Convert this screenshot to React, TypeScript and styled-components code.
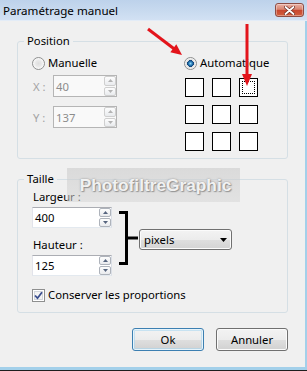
import styled, { createGlobalStyle } from "styled-components";

const GlobalStyle = createGlobalStyle`
  html, body {
    margin: 0;
    padding: 0;
  }
  body {
    background: #f0f0f0;
    font-family: "Noto Sans", "Open Sans", sans-serif;
    font-size: 11.3px;
    color: #000;
  }
`;

const Window = styled.div`
  position: relative;
  width: 307px;
  height: 371px;
  display: flex;
  flex-direction: column;
  overflow: hidden;
  background: #f0f0f0;
`;

const TitleBar = styled.div`
  flex: none;
  height: 20px;
  display: flex;
  justify-content: space-between;
  align-items: flex-start;
  padding-left: 3px;
  background: linear-gradient(#bdd2eb, #c8daef 55%, #d2e1f3);
  border-bottom: 1px solid #e3ecf7;
`;

const Title = styled.span`
  margin-top: 4px;
  font-size: 11.6px;
  line-height: 14px;
`;

const CloseButton = styled.div`
  width: 29px;
  height: 14px;
  margin: 3px 3px 0 0;
  box-sizing: border-box;
  display: flex;
  align-items: center;
  justify-content: center;
  border: 1px solid #8d4d45;
  border-radius: 3px;
  background: linear-gradient(#eab1a5, #d88470 45%, #c7462f 50%, #d2603f);
  box-shadow: inset 0 0 0 1px rgba(255, 255, 255, 0.35);
`;

const Client = styled.div`
  flex: 1;
  display: flex;
  flex-direction: column;
  padding: 12px 17px 0 17px;
  border-right: 2px solid #a3d0ea;
  border-bottom: 3px solid #a3d0ea;
`;

const BottomEdge = styled.div`
  flex: none;
  height: 1px;
  background: #1e1e1e;
`;

const GroupBox = styled.fieldset<{ $gap?: number }>`
  margin: ${(p) => p.$gap ?? 0}px 0 0 0;
  padding: 0;
  min-width: 0;
  border: 1px solid #d5dfe5;
  border-radius: 3px;
`;

const Legend = styled.legend`
  margin-left: 6px;
  padding: 0 3px;
  line-height: 16px;
`;

const PositionBody = styled.div`
  display: flex;
  padding: 6px 0 7px 14px;
`;

const Column = styled.div<{ $width?: number }>`
  display: flex;
  flex-direction: column;
  ${(p) => (p.$width ? `width: ${p.$width}px;` : "")}
`;

const OptionRow = styled.div<{ $gap?: number }>`
  display: flex;
  align-items: center;
  gap: 3px;
  height: 16px;
  line-height: 16px;
  margin-top: ${(p) => p.$gap ?? 0}px;
  white-space: nowrap;
`;

const RadioMark = styled.span<{ $checked?: boolean }>`
  flex: none;
  width: 13px;
  height: 13px;
  box-sizing: border-box;
  border-radius: 50%;
  border: 1px solid #8e8f8f;
  background: ${(p) =>
    p.$checked
      ? "radial-gradient(circle at 50% 50%, #8fd4f6 0, #2a7db8 1.8px, #0f3f73 3.3px, #dcdcdc 3.6px, #f8f8f8 5.5px)"
      : "radial-gradient(circle at 50% 50%, #dedede 0, #e9e9e9 3px, #fafafa 5.5px)"};
`;

const FieldRow = styled.div<{ $gap: number }>`
  display: flex;
  align-items: center;
  margin-top: ${(p) => p.$gap}px;
`;

const AxisLabel = styled.span`
  width: 21px;
  padding-left: 1px;
  box-sizing: border-box;
  color: #a3a3a3;
`;

const SpinBox = styled.div<{ $w: number; $h: number; $disabled?: boolean; $gap?: number }>`
  width: ${(p) => p.$w}px;
  height: ${(p) => p.$h}px;
  margin-top: ${(p) => p.$gap ?? 0}px;
  box-sizing: border-box;
  display: flex;
  align-items: center;
  justify-content: space-between;
  padding: 0 0 0 2px;
  border: 1px solid;
  border-color: ${(p) =>
    p.$disabled ? "#b5b5b5" : "#abadb3 #dbdfe6 #e3e9ef #e2e3ea"};
  background: ${(p) => (p.$disabled ? "#f9f9f9" : "#fff")};
  color: ${(p) => (p.$disabled ? "#8c8c8c" : "#000")};
`;

const SpinButtons = styled.div`
  align-self: stretch;
  display: flex;
  flex-direction: column;
  gap: 1px;
  width: 12px;
`;

const SpinButton = styled.span<{ $disabled?: boolean }>`
  flex: 1;
  box-sizing: border-box;
  display: flex;
  align-items: center;
  justify-content: center;
  border: 1px solid ${(p) => (p.$disabled ? "#cfcfcf" : "#aeb3bb")};
  border-radius: 2px;
  background: linear-gradient(#fdfdfd, #e9ebee);
`;

const PositionGrid = styled.div`
  display: grid;
  grid-template-columns: repeat(3, 19px);
  grid-auto-rows: 19px;
  gap: 8px;
  margin: 7px 0 0 1px;
`;

const Cell = styled.span<{ $focused?: boolean }>`
  box-sizing: border-box;
  border: 1px solid #000;
  background: #fff;
  ${(p) => (p.$focused ? "outline: 1px dotted #000; outline-offset: -4px;" : "")}
`;

const SizeBody = styled.div`
  display: flex;
  flex-direction: column;
  padding: 0 0 9px 14px;
`;

const SizeRow = styled.div`
  display: flex;
  align-items: flex-start;
`;

const Caption = styled.div<{ $gap: number }>`
  line-height: 16px;
  padding-left: 1px;
  margin-top: ${(p) => p.$gap}px;
`;

const Bracket = styled.svg`
  flex: none;
  margin: 23px 0 0 6px;
`;

const Dropdown = styled.div`
  width: 93px;
  height: 21px;
  margin-top: 42px;
  box-sizing: border-box;
  display: flex;
  align-items: center;
  justify-content: space-between;
  padding: 0 4px 0 4px;
  border: 1px solid #707070;
  border-radius: 3px;
  background: linear-gradient(#f3f3f3, #ececec 50%, #dfdfdf 50%, #d3d3d3);
  box-shadow: inset 0 0 0 1px #fbfbfb;
`;

const CheckMark = styled.span`
  flex: none;
  width: 13px;
  height: 13px;
  box-sizing: border-box;
  display: flex;
  align-items: center;
  justify-content: center;
  border: 1px solid #8e8f8f;
  background: #f4f4f4;
  box-shadow: inset 0 0 0 1px #fff, inset 0 0 0 2px #d2d6dc;
`;

const ButtonRow = styled.div`
  display: flex;
  justify-content: flex-end;
  gap: 12px;
  margin-top: 15px;
`;

const DialogButton = styled.div<{ $default?: boolean }>`
  width: 72px;
  height: 23px;
  box-sizing: border-box;
  display: flex;
  align-items: center;
  justify-content: center;
  border: 1px solid ${(p) => (p.$default ? "#3c7fb1" : "#707070")};
  border-radius: 3px;
  background: linear-gradient(#f3f3f3, #ececec 50%, #dfdfdf 50%, #d1d1d1);
  box-shadow: ${(p) =>
    p.$default
      ? "inset 0 0 0 1px #e7f4fb, inset 0 0 0 2px rgba(164, 214, 240, 0.55)"
      : "inset 0 0 0 1px #fbfbfb"};
`;

const Watermark = styled.div`
  position: absolute;
  left: 67px;
  top: 168px;
  width: 173px;
  height: 34px;
  display: flex;
  align-items: center;
  justify-content: center;
  padding-left: 4px;
  box-sizing: border-box;
  background: linear-gradient(rgba(200, 200, 200, 0.55), rgba(214, 214, 214, 0.55));
  font-family: "Liberation Sans", Arial, sans-serif;
  font-weight: bold;
  font-size: 17.3px;
  color: rgba(255, 255, 255, 0.9);
  text-shadow: 0 0 2px rgba(120, 120, 120, 0.8), 1px 1px 1px rgba(110, 110, 110, 0.6);
  pointer-events: none;
`;

const Arrows = styled.svg`
  position: absolute;
  left: 0;
  top: 0;
  pointer-events: none;
`;

function SpinArrow({ up, disabled }: { up?: boolean; disabled?: boolean }) {
  return (
    <svg width="5" height="3" viewBox="0 0 5 3">
      <polygon
        points={up ? "0,3 2.5,0 5,3" : "0,0 2.5,3 5,0"}
        fill={disabled ? "#b3b3b3" : "#56657f"}
      />
    </svg>
  );
}

function SpinInput(props: {
  value: string;
  width: number;
  height: number;
  disabled?: boolean;
  gap?: number;
}) {
  return (
    <SpinBox $w={props.width} $h={props.height} $disabled={props.disabled} $gap={props.gap}>
      <span>{props.value}</span>
      <SpinButtons>
        <SpinButton $disabled={props.disabled}>
          <SpinArrow up disabled={props.disabled} />
        </SpinButton>
        <SpinButton $disabled={props.disabled}>
          <SpinArrow disabled={props.disabled} />
        </SpinButton>
      </SpinButtons>
    </SpinBox>
  );
}

export default function App() {
  return (
    <>
      <GlobalStyle />
      <Window>
        <TitleBar>
          <Title>Paramétrage manuel</Title>
          <CloseButton>
            <svg width="11" height="9" viewBox="0 0 11 9">
              <path
                d="M1.5 1 L9.5 8 M9.5 1 L1.5 8"
                stroke="#6b2a22"
                strokeWidth="3.2"
                strokeLinecap="round"
              />
              <path
                d="M1.5 1 L9.5 8 M9.5 1 L1.5 8"
                stroke="#fff"
                strokeWidth="1.8"
                strokeLinecap="round"
              />
            </svg>
          </CloseButton>
        </TitleBar>

        <Client>
          <GroupBox>
            <Legend>Position</Legend>
            <PositionBody>
              <Column $width={152}>
                <OptionRow>
                  <RadioMark />
                  Manuelle
                </OptionRow>
                <FieldRow $gap={4}>
                  <AxisLabel>X :</AxisLabel>
                  <SpinInput value="40" width={64} height={22} disabled />
                </FieldRow>
                <FieldRow $gap={9}>
                  <AxisLabel>Y :</AxisLabel>
                  <SpinInput value="137" width={64} height={22} disabled />
                </FieldRow>
              </Column>
              <Column>
                <OptionRow>
                  <RadioMark $checked />
                  Automatique
                </OptionRow>
                <PositionGrid>
                  {Array.from({ length: 9 }, (_, i) => (
                    <Cell key={i} $focused={i === 2} />
                  ))}
                </PositionGrid>
              </Column>
            </PositionBody>
          </GroupBox>

          <GroupBox $gap={12}>
            <Legend>Taille</Legend>
            <SizeBody>
              <SizeRow>
                <Column $width={80}>
                  <Caption $gap={2}>Largeur :</Caption>
                  <SpinInput value="400" width={80} height={21} gap={2} />
                  <Caption $gap={9}>Hauteur :</Caption>
                  <SpinInput value="125" width={80} height={21} gap={2} />
                </Column>
                <Bracket width="21" height="56" viewBox="0 0 21 56">
                  <path
                    d="M1 2.5 H8.5 V53.5 H1 M8.5 28 H20"
                    fill="none"
                    stroke="#000"
                    strokeWidth="3"
                  />
                </Bracket>
                <Dropdown>
                  <span>pixels</span>
                  <svg width="7" height="4" viewBox="0 0 7 4">
                    <polygon points="0,0 7,0 3.5,4" fill="#000" />
                  </svg>
                </Dropdown>
              </SizeRow>
              <OptionRow $gap={11}>
                <CheckMark>
                  <svg width="9" height="9" viewBox="0 0 9 9">
                    <path
                      d="M1 4.5 L3.5 7.2 L8 1.2"
                      fill="none"
                      stroke="#3b4f8f"
                      strokeWidth="1.8"
                    />
                  </svg>
                </CheckMark>
                Conserver les proportions
              </OptionRow>
            </SizeBody>
          </GroupBox>

          <ButtonRow>
            <DialogButton $default>Ok</DialogButton>
            <DialogButton>Annuler</DialogButton>
          </ButtonRow>
        </Client>
        <BottomEdge />

        <Watermark>PhotofiltreGraphic</Watermark>

        <Arrows width="307" height="371" viewBox="0 0 307 371">
          <line x1="148" y1="29" x2="175" y2="49.5" stroke="#e3141b" strokeWidth="3" />
          <polygon points="182,55 170.3,52.3 176.3,44.3" fill="#e3141b" />
          <line x1="247" y1="24" x2="247" y2="76" stroke="#e3141b" strokeWidth="3" />
          <polygon points="247,86 242,74 252,74" fill="#e3141b" />
        </Arrows>
      </Window>
    </>
  );
}
